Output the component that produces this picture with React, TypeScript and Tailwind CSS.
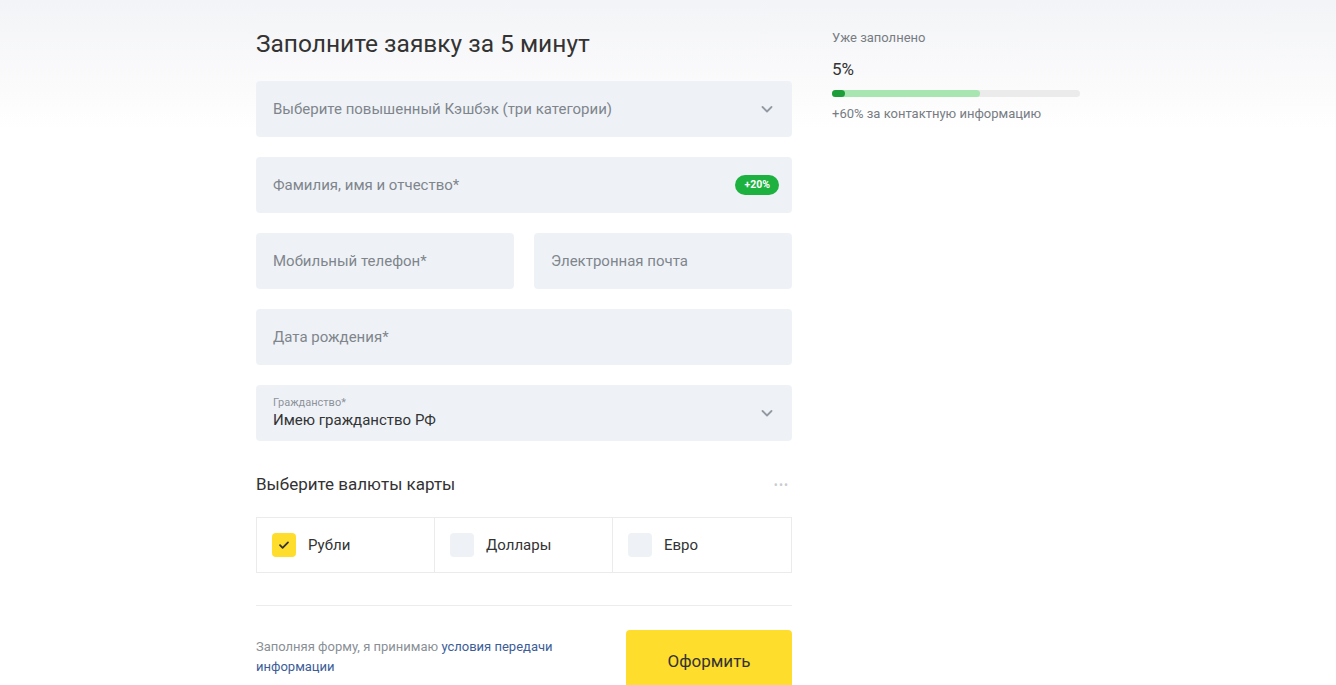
import React from "react";

const Chevron = () => (
  <svg width="14" height="14" viewBox="0 0 14 14" fill="none">
    <path d="M2.5 5l4.5 4.5L11.5 5" stroke="#9299a2" strokeWidth="1.8" strokeLinecap="round" strokeLinejoin="round" />
  </svg>
);

const Field = ({ children, className = "" }: { children: React.ReactNode; className?: string }) => (
  <div className={`h-[56px] bg-[#eef2f7] rounded-[4px] flex items-center px-[17px] ${className}`}>{children}</div>
);

export default function App() {
  return (
    <div
      className="w-[1336px] h-[685px] overflow-hidden bg-[linear-gradient(180deg,#f3f4f7_0px,#fbfbfc_90px,#ffffff_130px)] text-[#333]"
      style={{ fontFamily: "Roboto, 'Noto Sans', sans-serif" }}
    >
      <div className="flex pl-[256px] gap-[40px]">
        <div className="w-[536px] flex flex-col">
          <h1 className="text-[24.5px] leading-[30px] mt-[29px] text-[#333] font-normal">Заполните заявку за 5 минут</h1>
          <div className="flex flex-col gap-[20px] mt-[22px]">
            <Field className="justify-between pr-[18px]">
              <span className="text-[15px] text-[#80858c]">Выберите повышенный Кэшбэк (три категории)</span>
              <Chevron />
            </Field>
            <Field className="justify-between pr-[13px]">
              <span className="text-[15px] text-[#80858c]">Фамилия, имя и отчество*</span>
              <span className="bg-[#1db240] text-white text-[10.5px] font-bold rounded-full h-[20px] px-[9px] flex items-center">+20%</span>
            </Field>
            <div className="flex gap-[20px]">
              <Field className="w-[258px]">
                <span className="text-[15px] text-[#80858c]">Мобильный телефон*</span>
              </Field>
              <Field className="flex-1">
                <span className="text-[15px] text-[#80858c]">Электронная почта</span>
              </Field>
            </div>
            <Field>
              <span className="text-[15px] text-[#80858c]">Дата рождения*</span>
            </Field>
            <Field className="justify-between pr-[18px]">
              <div className="flex flex-col">
                <span className="text-[11px] leading-[14px] text-[#8e939a]">Гражданство*</span>
                <span className="text-[15px] leading-[20px] text-[#333]">Имею гражданство РФ</span>
              </div>
              <Chevron />
            </Field>
          </div>
          <div className="flex justify-between items-center mt-[32px] h-[24px]">
            <span className="text-[17px] text-[#333]">Выберите валюты карты</span>
            <span className="text-[#c9ccd1] text-[12px] tracking-[1px] mr-[3px]">•••</span>
          </div>
          <div className="mt-[20px] grid grid-cols-[178px_178px_180px] border border-[#ebebeb] h-[56px]">
            <div className="flex items-center px-[15px] gap-[12px] border-r border-[#ebebeb]">
              <span className="w-[24px] h-[24px] rounded-[4px] bg-[#ffdd2d] flex items-center justify-center">
                <svg width="12" height="12" viewBox="0 0 12 12" fill="none">
                  <path d="M2 6.2l2.6 2.6L10 3.4" stroke="#333" strokeWidth="1.8" strokeLinecap="round" strokeLinejoin="round" />
                </svg>
              </span>
              <span className="text-[15px] text-[#333]">Рубли</span>
            </div>
            <div className="flex items-center px-[15px] gap-[12px] border-r border-[#ebebeb]">
              <span className="w-[24px] h-[24px] rounded-[4px] bg-[#eef1f5]" />
              <span className="text-[15px] text-[#333]">Доллары</span>
            </div>
            <div className="flex items-center px-[15px] gap-[12px]">
              <span className="w-[24px] h-[24px] rounded-[4px] bg-[#eef1f5]" />
              <span className="text-[15px] text-[#333]">Евро</span>
            </div>
          </div>
          <div className="mt-[32px] border-t border-[#ececec]" />
          <div className="flex justify-between mt-[24px]">
            <div className="text-[13px] leading-[20px] text-[#8a8f96] mt-[7px] w-[320px] flex flex-col">
              <div>
                <span>Заполняя форму, я принимаю </span>
                <span className="text-[#3c5d98]">условия передачи</span>
              </div>
              <span className="text-[#3c5d98]">информации</span>
            </div>
            <button className="w-[166px] h-[64px] bg-[#ffdd2d] rounded-[4px] text-[17px] text-[#333]">Оформить</button>
          </div>
        </div>
        <div className="w-[248px] pt-[30px]">
          <div className="text-[13px] leading-[16px] text-[#777c83]">Уже заполнено</div>
          <div className="text-[17px] leading-[22px] mt-[12px] text-[#333]">5%</div>
          <div className="relative mt-[10px] h-[7px] rounded-full bg-[#ebebeb]">
            <div className="absolute left-0 top-0 h-[7px] w-[148px] rounded-full bg-[#a7e5b1]" />
            <div className="absolute left-0 top-0 h-[7px] w-[13px] rounded-full bg-[#1e9e3a]" />
          </div>
          <div className="text-[13px] leading-[16px] mt-[9px] text-[#777c83]">+60% за контактную информацию</div>
        </div>
      </div>
    </div>
  );
}
